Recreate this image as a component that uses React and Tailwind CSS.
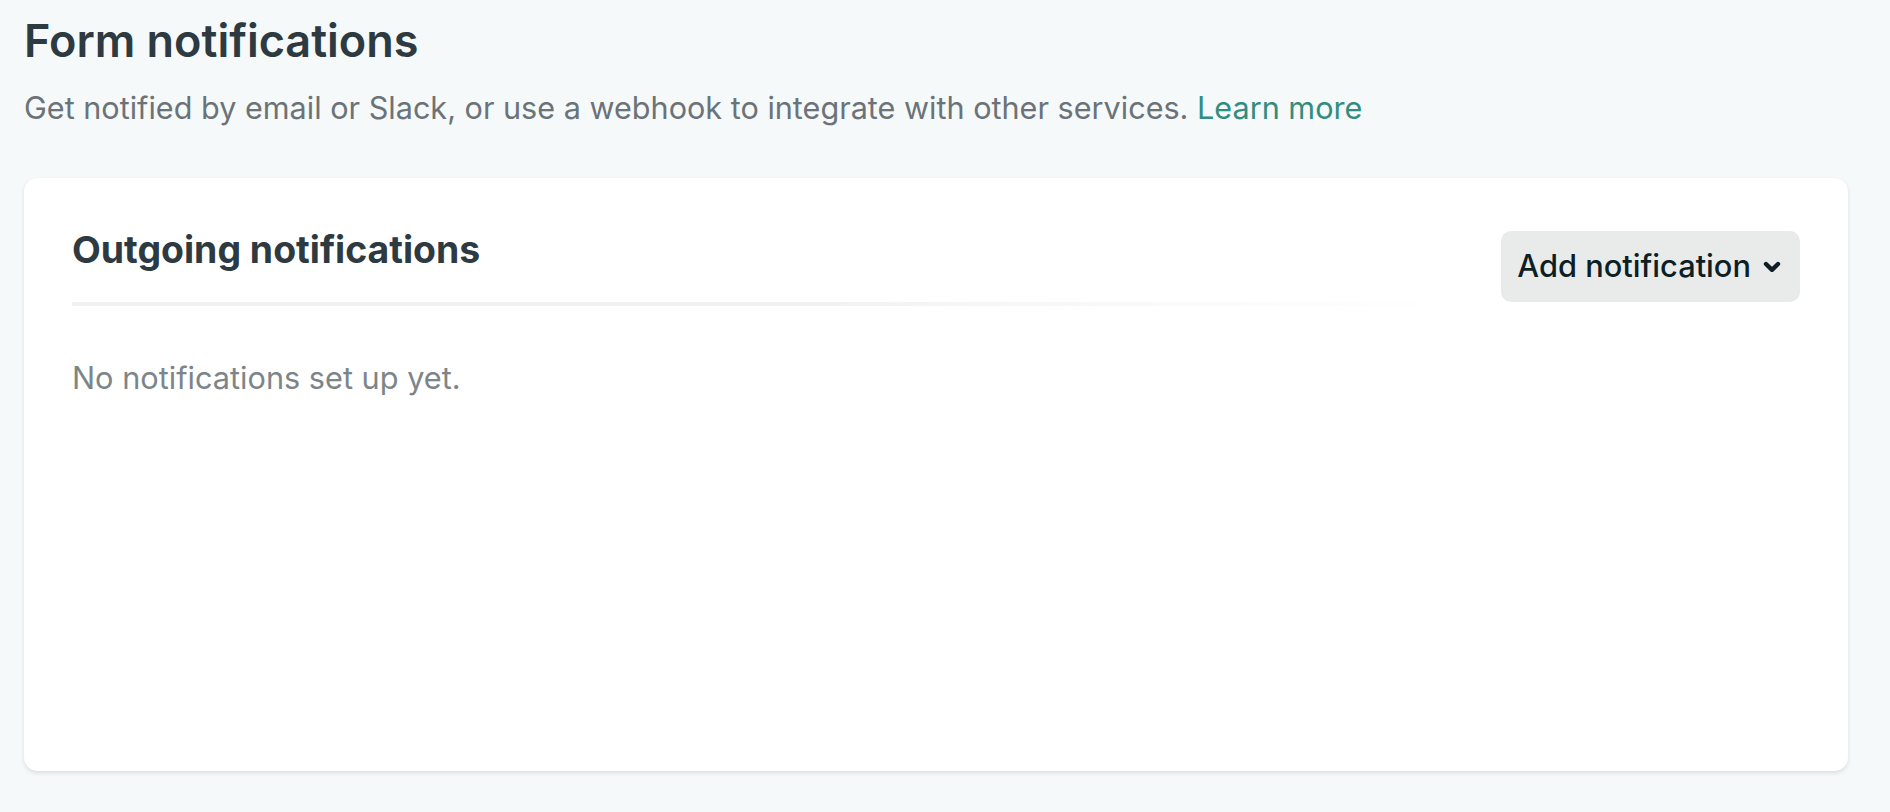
import React from 'react';

function Chevron() {
    return (
        <svg width="18" height="12" viewBox="0 0 18 12" fill="none" xmlns="http://www.w3.org/2000/svg">
            <path d="M3 3L9 8.8L15 3" stroke="#0e1e25" strokeWidth="4.4" strokeLinecap="round" strokeLinejoin="round" />
        </svg>
    );
}

export default function App() {
    return (
        <div className="min-h-[812px] bg-[#f6f9fa] pl-[24px] pr-[42px] pt-[15px] font-['Inter',sans-serif]">
            {/* Page heading */}
            <h1 className="text-[45px] leading-[52px] font-semibold text-[#2d3a41]">
                Form notifications
            </h1>
            <p className="mt-[22px] text-[30.6px] leading-[38px] text-[#6b7378]">
                Get notified by email or Slack, or use a webhook to integrate with other services.{' '}
                <a href="#" className="text-[#318d80]">Learn more</a>
            </p>

            {/* Card */}
            <div className="mt-[51px] h-[593px] rounded-[14px] bg-white px-[48px] pt-[52px] shadow-[0_2px_4px_rgba(14,30,37,0.12)]">
                <div className="flex items-start">
                    <div className="flex-1 pr-[40px]">
                        <h2 className="text-[37.4px] leading-[40px] font-bold text-[#2d3a41]">
                            Outgoing notifications
                        </h2>
                        <div className="mt-[32px] h-[4px] bg-gradient-to-r from-[#f2f4f4] from-55% to-white"></div>
                    </div>
                    <button className="mt-[1px] flex h-[71px] items-center gap-[12px] rounded-[10px] bg-[#e9ebeb] pl-[16px] pr-[19px] text-[30.8px] font-medium text-[#0e1e25]">
                        Add notification
                        <Chevron />
                    </button>
                </div>
                <p className="mt-[53px] text-[30.7px] leading-[38px] text-[#7d8589]">
                    No notifications set up yet.
                </p>
            </div>
        </div>
    );
}
